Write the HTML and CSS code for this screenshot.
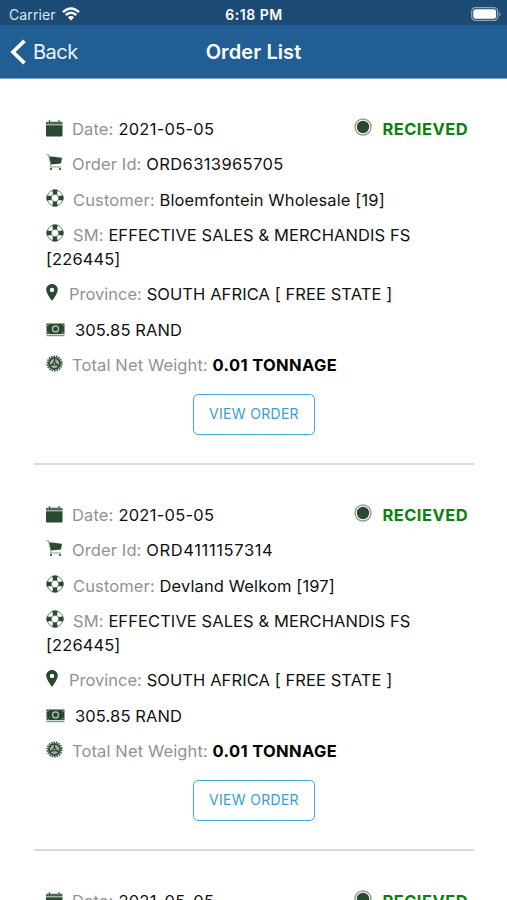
FILE: index.html
```html
<!DOCTYPE html>
<html lang="en">
<head>
<meta charset="utf-8">
<title>Order List</title>
<link rel="stylesheet" href="styles.css">
</head>
<body>
<svg class="sprite" aria-hidden="true">
  <symbol id="calendar" viewBox="0 0 17 17"><path d="M0 5.3h16.5v10.2q0 1-1 1H1q-1 0-1-1z"/><path d="M1 1.7h14.5q1 0 1 1v1.9H0V2.7q0-1 1-1z" opacity=".85"/><path d="M3.5 0v3M13 0v3" stroke="#a5b1a8" stroke-width="2"/><path d="M3.5.7v2.8M13 .7v2.8" stroke="#294a31" stroke-width="1"/></symbol>
  <symbol id="cart" viewBox="0 0 17 17"><path d="M3 2.3 16 3.8 15 9.5 5 10.5z"/><path d="M.5.8h2l2.4 10.4L4 13h11" fill="none" stroke="#7b897e" stroke-width=".9"/><circle cx="5" cy="15" r="1.1"/><circle cx="14" cy="15" r="1.1"/></symbol>
  <symbol id="buoy" viewBox="0 0 18 18"><circle cx="9" cy="9" r="8" fill="#fff" stroke="#718078" stroke-width="1"/><path d="M6.4.8Q9 0 11.6.8L11 6H7zM6.4 17.2q2.6.8 5.2 0L11 12H7zM.8 6.4Q0 9 .8 11.6L6 11V7zM17.2 6.4q.8 2.6 0 5.2L12 11V7z"/><circle cx="9" cy="9" r="3.8" fill="#fff" stroke="#4e6454" stroke-width=".8"/></symbol>
  <symbol id="pin" viewBox="0 0 12 17"><path fill-rule="evenodd" d="M6 0C2.7 0 .2 2.5.2 5.6.2 9.8 6 17 6 17s5.8-7.2 5.8-11.4C11.8 2.5 9.3 0 6 0zm0 3.7a2.2 2.2 0 1 1 0 4.4 2.2 2.2 0 0 1 0-4.4z"/></symbol>
  <symbol id="cash" viewBox="0 0 19 14"><path d="M.5.5h18v10.7H.5z"/><path d="M.5 12.6h18" stroke="#829087" stroke-width="1.2"/><circle cx="9.5" cy="5.9" r="3" fill="none" stroke="#c4ccc5" stroke-width="1.1"/><path d="M.5 3.5 3.5.5M15.5.5l3 3M.5 8.2l3 3m12 0 3-3" stroke="#9aa99d" stroke-width=".9"/></symbol>
  <symbol id="cog" viewBox="0 0 17 17"><circle cx="8.5" cy="8.5" r="7.3" fill="none" stroke="#405747" stroke-width="1.6" stroke-dasharray="1.7 .85"/><circle cx="8.5" cy="8.5" r="5.6" fill="#a5afa6" stroke="#294a31" stroke-width="1.8"/><path d="M8.5 8.5V3.3M8.5 8.5l4.6 2.5M8.5 8.5 3.9 11" stroke="#294a31" stroke-width="1.5"/><circle cx="8.5" cy="8.5" r="1.9"/><circle cx="8.5" cy="8.5" r=".8" fill="#c8d0c9"/></symbol>
  <symbol id="radio" viewBox="0 0 18 18"><circle cx="9" cy="9" r="8" fill="#fff" stroke="#939b94" stroke-width="1.4"/><circle cx="9" cy="9" r="6.2"/></symbol>
</svg>
<header>
  <div class="status-bar">
    <div class="carrier">Carrier <svg class="wifi" viewBox="0 0 18 14"><path d="M1 5.2Q9-2.1 17 5.2M3.8 8Q9 3.4 14.2 8" fill="none" stroke="#fff" stroke-width="2.4"/><path d="m9 13.5-3.2-3.2Q9 7.7 12.2 10.3z" fill="#fff"/></svg></div>
    <div class="clock">6:18 PM</div>
    <svg class="battery" viewBox="0 0 30 14"><rect x=".7" y=".7" width="26" height="12.6" rx="3.8" fill="none" stroke="#8ba5bd" stroke-width="1.3"/><rect x="2.3" y="2.3" width="22.8" height="9.4" rx="2.3" fill="#fff"/><path d="M28.3 4.7q2.6 2.3 0 4.6z" fill="#8ba5bd"/></svg>
  </div>
  <nav>
    <a class="back"><svg viewBox="0 0 17 26"><path d="M14.5 1.8 3 13l11.5 11.2" fill="none" stroke="#fff" stroke-width="3.7"/></svg>Back</a>
    <h1>Order List</h1>
    <span></span>
  </nav>
</header>
<main>
  <article class="order">
    <div class="row date"><svg><use href="#calendar"/></svg><span class="label">Date:</span> <span class="value">2021-05-05</span><div class="state"><svg><use href="#radio"/></svg><b>RECIEVED</b></div></div>
    <div class="row id"><svg><use href="#cart"/></svg><span class="label">Order Id:</span> <span class="value">ORD6313965705</span></div>
    <div class="row customer"><svg><use href="#buoy"/></svg><span class="label">Customer:</span> <span class="value">Bloemfontein Wholesale [19]</span></div>
    <div class="row sm"><svg><use href="#buoy"/></svg><span class="label">SM:</span> <span class="value">EFFECTIVE SALES &amp; MERCHANDIS FS<br>[226445]</span></div>
    <div class="row province"><svg><use href="#pin"/></svg><span class="label">Province:</span> <span class="value">SOUTH AFRICA [ FREE STATE ]</span></div>
    <div class="row amount"><svg><use href="#cash"/></svg><span class="value">305.85 RAND</span></div>
    <div class="row weight"><svg><use href="#cog"/></svg><span class="label">Total Net Weight:</span> <b class="value">0.01 TONNAGE</b></div>
    <button>VIEW ORDER</button>
  </article>
  <article class="order">
    <div class="row date"><svg><use href="#calendar"/></svg><span class="label">Date:</span> <span class="value">2021-05-05</span><div class="state"><svg><use href="#radio"/></svg><b>RECIEVED</b></div></div>
    <div class="row id"><svg><use href="#cart"/></svg><span class="label">Order Id:</span> <span class="value repeated">ORD4111157314</span></div>
    <div class="row customer"><svg><use href="#buoy"/></svg><span class="label">Customer:</span> <span class="value">Devland Welkom [197]</span></div>
    <div class="row sm"><svg><use href="#buoy"/></svg><span class="label">SM:</span> <span class="value">EFFECTIVE SALES &amp; MERCHANDIS FS<br>[226445]</span></div>
    <div class="row province"><svg><use href="#pin"/></svg><span class="label">Province:</span> <span class="value">SOUTH AFRICA [ FREE STATE ]</span></div>
    <div class="row amount"><svg><use href="#cash"/></svg><span class="value">305.85 RAND</span></div>
    <div class="row weight"><svg><use href="#cog"/></svg><span class="label">Total Net Weight:</span> <b class="value">0.01 TONNAGE</b></div>
    <button>VIEW ORDER</button>
  </article>
  <article class="order">
    <div class="row date"><svg><use href="#calendar"/></svg><span class="label">Date:</span> <span class="value">2021-05-05</span><div class="state"><svg><use href="#radio"/></svg><b>RECIEVED</b></div></div>
  </article>
</main>
</body>
</html>
```
FILE: styles.css
```css
* { box-sizing: border-box; }
body {
  margin: 0;
  height: 900px;
  overflow: hidden;
  background: #fff;
  color: #111;
  font-family: Inter, "Liberation Sans", sans-serif;
}
.sprite { display: none; }
header {
  height: 79px;
  color: #fff;
  background: #215e93;
  border-bottom: 1px solid #78a6ce;
}
.status-bar, nav {
  display: grid;
  grid-template-columns: 1fr auto 1fr;
  align-items: center;
}
.status-bar {
  height: 25px;
  padding: 3px 6px 0 9px;
  background: #1c4c75;
  font-size: 14px;
}
.carrier { display: flex; align-items: center; gap: 6px; color: #dce7f0; letter-spacing: .1px; }
.wifi { width: 18px; height: 14px; }
.clock { margin-right: 2px; font-weight: 600; font-size: 14px; letter-spacing: .5px; }
.battery { width: 30px; height: 14px; justify-self: end; }
nav { height: 53px; padding: 0 10px; }
.back { display: flex; align-items: center; gap: 6px; font-size: 20px; letter-spacing: -.5px; color: #edf4fa; }
.back svg { width: 17px; height: 26px; }
h1 { margin: 0; font-size: 20px; font-weight: 600; letter-spacing: .1px; }
main { padding: 0 33px 0 34px; }
.order {
  display: flex;
  flex-direction: column;
  gap: 12px;
  height: 386px;
  padding: 38.5px 6px 0 12px;
  border-bottom: 2px solid #dcdcdc;
}
.row {
  line-height: 23.5px;
  font-size: 16.5px;
  letter-spacing: .12px;
  white-space: nowrap;
}
.row svg {
  width: 17px;
  height: 17px;
  margin-right: 9px;
  vertical-align: -1px;
  fill: #294a31;
}
.row.customer svg, .row.sm svg { width: 18px; height: 18px; }
.row.province svg { width: 12px; margin-right: 11px; }
.row.amount svg { width: 19px; height: 14px; margin-right: 10px; }
.label { color: #929292; }
.province .label { letter-spacing: 0; }
.date .value { letter-spacing: .25px; }
.id .value { letter-spacing: .38px; }
.id .value.repeated { letter-spacing: .62px; }
.sm .value, .province .value { letter-spacing: .08px; }
b { font-weight: 700; color: #000; }
.weight .value { letter-spacing: .35px; }
.date { display: flex; align-items: center; }
.date > svg { margin-bottom: 2px; }
.date .label { margin-right: 5px; }
.state { display: flex; align-items: center; margin-left: auto; }
.state svg { width: 18px; height: 18px; margin-bottom: 4px; margin-right: 10px; }
.state b { color: #0b800f; letter-spacing: .45px; }
button {
  align-self: center;
  width: 122px;
  height: 41px;
  margin: 4px 6px 0 0;
  padding: 0 0 2px;
  border: 1.5px solid #4aa9d5;
  border-radius: 5px;
  background: #fff;
  color: #3d9dcc;
  font: 14px Inter, sans-serif;
  letter-spacing: .3px;
}
```
